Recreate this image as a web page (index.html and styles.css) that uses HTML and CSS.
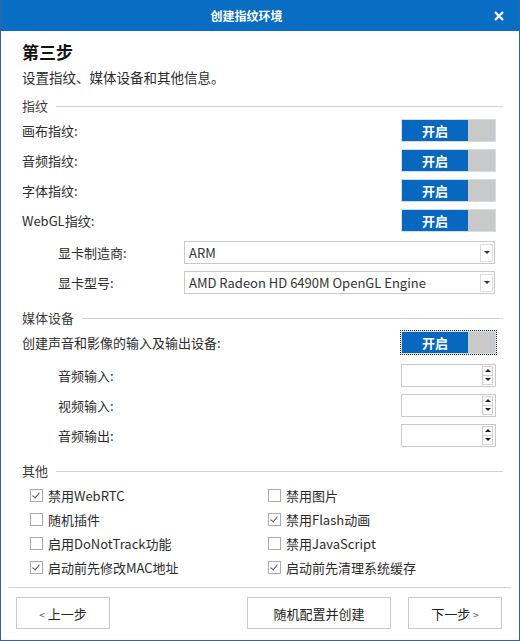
FILE: index.html
```html
<!DOCTYPE html>
<html lang="zh-CN">

<head>
    <meta charset="UTF-8">
    <meta name="viewport" content="width=device-width, initial-scale=1.0">
    <title>创建指纹环境</title>
    <link rel="stylesheet" href="styles.css">
</head>

<body>
    <div class="window">
        <div class="titlebar">
            <span class="title">创建指纹环境</span>
            <svg class="close" width="12" height="12" viewBox="0 0 12 12">
                <path d="M2 2 L10 10 M10 2 L2 10" stroke="#fff" stroke-width="2.2" fill="none" />
            </svg>
        </div>

        <div class="content">
            <div class="step">第三步</div>
            <div class="desc">设置指纹、媒体设备和其他信息。</div>

            <!-- 指纹 -->
            <div class="group-head first"><span>指纹</span></div>
            <div class="row">
                <span>画布指纹:</span>
                <div class="toggle"><span class="on">开启</span><span class="off"></span></div>
            </div>
            <div class="row">
                <span>音频指纹:</span>
                <div class="toggle"><span class="on">开启</span><span class="off"></span></div>
            </div>
            <div class="row">
                <span>字体指纹:</span>
                <div class="toggle"><span class="on">开启</span><span class="off"></span></div>
            </div>
            <div class="row">
                <span>WebGL指纹:</span>
                <div class="toggle"><span class="on">开启</span><span class="off"></span></div>
            </div>

            <div class="selects">
                <div class="row sub">
                    <span class="sub-label">显卡制造商:</span>
                    <div class="select"><span>ARM</span><span class="arrow"></span></div>
                </div>
                <div class="row sub">
                    <span class="sub-label">显卡型号:</span>
                    <div class="select"><span>AMD Radeon HD 6490M OpenGL Engine</span><span class="arrow"></span></div>
                </div>
            </div>

            <!-- 媒体设备 -->
            <div class="group-head"><span>媒体设备</span></div>
            <div class="row">
                <span>创建声音和影像的输入及输出设备:</span>
                <div class="toggle focused"><span class="on">开启</span><span class="off"></span></div>
            </div>

            <div class="spinners">
                <div class="row sub">
                    <span>音频输入:</span>
                    <div class="spin"><span class="spin-btns"><span class="up"></span><span class="down"></span></span></div>
                </div>
                <div class="row sub">
                    <span>视频输入:</span>
                    <div class="spin"><span class="spin-btns"><span class="up"></span><span class="down"></span></span></div>
                </div>
                <div class="row sub">
                    <span>音频输出:</span>
                    <div class="spin"><span class="spin-btns"><span class="up"></span><span class="down"></span></span></div>
                </div>
            </div>

            <!-- 其他 -->
            <div class="group-head"><span>其他</span></div>
            <div class="checks">
                <label class="check"><span class="box checked"></span>禁用WebRTC</label>
                <label class="check"><span class="box"></span>禁用图片</label>
                <label class="check"><span class="box"></span>随机插件</label>
                <label class="check"><span class="box checked"></span>禁用Flash动画</label>
                <label class="check"><span class="box"></span>启用DoNotTrack功能</label>
                <label class="check"><span class="box"></span>禁用JavaScript</label>
                <label class="check"><span class="box checked"></span>启动前先修改MAC地址</label>
                <label class="check"><span class="box checked"></span>启动前先清理系统缓存</label>
            </div>
        </div>

        <div class="footer">
            <button class="btn small"><span class="chev">&lt;</span> 上一步</button>
            <button class="btn wide">随机配置并创建</button>
            <button class="btn small">下一步 <span class="chev">&gt;</span></button>
        </div>
    </div>
</body>

</html>
```

FILE: styles.css
```css
body {
    margin: 0;
    font-family: "Noto Sans CJK SC", "Noto Sans", sans-serif;
    font-size: 13px;
    color: #2b2b2b;
    background: #fff;
}

.window {
    box-sizing: border-box;
    width: 520px;
    height: 641px;
    border: 1px solid #2a66a0;
    border-top: none;
    background: #fff;
    overflow: hidden;
}

.titlebar {
    height: 31px;
    margin: 0 -1px;
    background-color: #0a6dc4;
    display: flex;
    align-items: center;
    padding-left: 12px;
}

.title {
    flex: 1;
    text-align: center;
    color: #fff;
    font-size: 12px;
    font-weight: bold;
}

.close {
    margin: 1px 15px 0 12px;
}

.content {
    padding: 0 16px 0 21px;
}

.step {
    margin-top: 9px;
    height: 24px;
    line-height: 24px;
    font-size: 17px;
    font-weight: bold;
    color: #111;
}

.desc {
    height: 27px;
    line-height: 27px;
    font-size: 13.5px;
}

.group-head {
    display: flex;
    align-items: center;
    gap: 8px;
    padding-top: 12px;
    line-height: 18px;
    color: #3a3a3a;
}

.group-head.first {
    padding-top: 6px;
}

.group-head::after {
    content: "";
    flex: 1;
    height: 1px;
    background: #d2d2d2;
}

.row {
    display: flex;
    align-items: center;
    justify-content: space-between;
    height: 30px;
    padding-right: 7px;
}

.row.sub {
    padding-left: 36px;
}

.selects {
    margin-top: 2px;
}

.selects .row {
    padding-right: 8px;
}

.sub-label {
    width: 126px;
    flex: none;
}

.toggle {
    box-sizing: border-box;
    width: 95px;
    height: 23px;
    border: 1px solid #d3dde8;
    display: flex;
}

.toggle.focused {
    outline: 1px dotted #222;
    outline-offset: 0;
}

.toggle .on {
    width: 66px;
    background-color: #0868bf;
    color: #fff;
    font-weight: bold;
    text-align: center;
    line-height: 21px;
}

.toggle .off {
    flex: 1;
    background-color: #c9c9c9;
}

.select {
    box-sizing: border-box;
    flex: 1;
    height: 23px;
    border: 1px solid #c9c9c9;
    display: flex;
    align-items: stretch;
    padding: 2px 1px 1px 4px;
}

.select span:first-child {
    flex: 1;
    line-height: 18px;
    color: #333;
}

.arrow {
    box-sizing: border-box;
    width: 13px;
    border: 1px solid #dedede;
    display: flex;
    align-items: center;
    justify-content: center;
}

.arrow::after {
    content: "";
    border-left: 3px solid transparent;
    border-right: 3px solid transparent;
    border-top: 3px solid #333;
}

.spinners {
    margin-top: 3px;
}

.spin {
    box-sizing: border-box;
    width: 95px;
    height: 23px;
    border: 1px solid #c9c9c9;
    display: flex;
    justify-content: flex-end;
    padding: 1px 2px 1px 0;
}

.spin-btns {
    width: 11px;
    display: flex;
    flex-direction: column;
}

.spin-btns span {
    box-sizing: border-box;
    flex: 1;
    border: 1px solid #d0d0d0;
    display: flex;
    align-items: center;
    justify-content: center;
}

.spin-btns .down {
    margin-top: -1px;
}

.spin-btns .up::after {
    content: "";
    border-left: 3px solid transparent;
    border-right: 3px solid transparent;
    border-bottom: 3px solid #222;
}

.spin-btns .down::after {
    content: "";
    border-left: 3px solid transparent;
    border-right: 3px solid transparent;
    border-top: 3px solid #222;
}

.checks {
    margin-top: 3px;
    margin-left: 8px;
    display: grid;
    grid-template-columns: 238px 1fr;
    grid-auto-rows: 24px;
}

.check {
    display: flex;
    align-items: center;
    gap: 5px;
}

.box {
    box-sizing: border-box;
    width: 13px;
    height: 13px;
    border: 1px solid #ababab;
    background: #fff;
    position: relative;
}

.box.checked::after {
    content: "";
    position: absolute;
    left: 3px;
    top: 1px;
    width: 3px;
    height: 6px;
    border-right: 1.3px solid #555;
    border-bottom: 1.3px solid #555;
    transform: rotate(40deg);
}

.footer {
    margin: 8px 8px 0 7px;
    border-top: 1px solid #cfcfcf;
    padding: 9px 9px 0 8px;
    display: flex;
    gap: 17px;
}

.btn {
    height: 32px;
    border: 1px solid #c9c9c9;
    background: #fff;
    font-family: inherit;
    font-size: 13px;
    color: #222;
    padding: 0;
}

.btn.small {
    width: 94px;
}

.btn.wide {
    width: 144px;
    margin-left: auto;
}

.chev {
    font-size: 10px;
    color: #555;
}
```
